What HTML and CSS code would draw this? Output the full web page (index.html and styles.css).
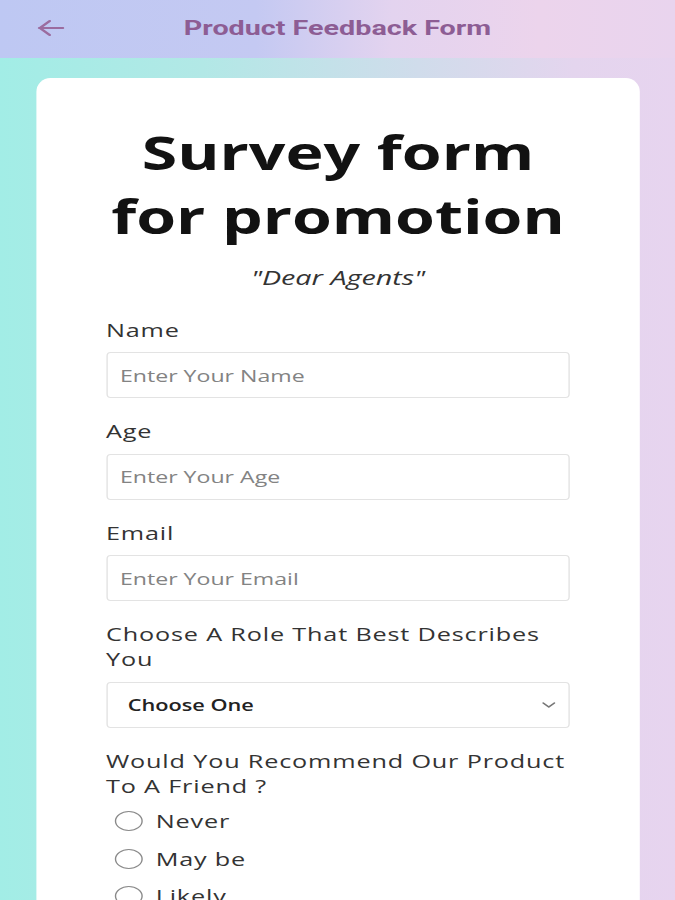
FILE: index.html
```html
<!DOCTYPE html>
<html lang="en">
<head>
<meta charset="utf-8">
<title>Product Feedback Form</title>
<link rel="stylesheet" href="styles.css">
</head>
<body>
<div class="page">
  <header class="topbar">
    <svg class="back" width="20" height="18" viewBox="0 0 20 18" aria-hidden="true">
      <path d="M19 9H2M9.5 2L2.5 9L9.5 16" fill="none" stroke="#9b6c9f" stroke-width="2" stroke-linecap="round" stroke-linejoin="round"/>
    </svg>
    <h1 class="topbar-title">Product Feedback Form</h1>
    <span></span>
  </header>
  <main class="bg">
    <form class="card">
      <h2 class="title">Survey form<br>for promotion</h2>
      <p class="subtitle">"Dear Agents"</p>

      <div class="field">
        <label class="label" for="name">Name</label>
        <input class="input" id="name" type="text" placeholder="Enter Your Name">
      </div>
      <div class="field">
        <label class="label" for="age">Age</label>
        <input class="input" id="age" type="text" placeholder="Enter Your Age">
      </div>
      <div class="field">
        <label class="label" for="email">Email</label>
        <input class="input" id="email" type="text" placeholder="Enter Your Email">
      </div>
      <div class="field">
        <label class="label">Choose A Role That Best Describes You</label>
        <div class="select">
          <span>Choose One</span>
          <svg class="chev" width="10" height="6" viewBox="0 0 10 6" aria-hidden="true">
            <path d="M1 1L5 5L9 1" fill="none" stroke="#777" stroke-width="1.3" stroke-linecap="round" stroke-linejoin="round"/>
          </svg>
        </div>
      </div>
      <div class="field">
        <span class="label label-q">Would You Recommend Our Product To A Friend ?</span>
        <div class="radios">
          <label class="radio"><span class="dot"></span>Never</label>
          <label class="radio"><span class="dot"></span>May be</label>
          <label class="radio"><span class="dot"></span>Likely</label>
        </div>
      </div>
    </form>
  </main>
</div>
</body>
</html>
```

FILE: styles.css
```css
* {
  box-sizing: border-box;
}

html, body {
  margin: 0;
  padding: 0;
}

body {
  background: #e6d5ee;
  overflow: hidden;
  font-family: "Open Sans", "Noto Sans", sans-serif;
  color: #333;
}

.page {
  width: 482.15px;
  transform: scaleX(1.4);
  transform-origin: 0 0;
}

.topbar {
  height: 58px;
  background: linear-gradient(90deg, #bec8f3 0%, #c4c9f2 38%, #e3d3ef 58%, #ecd4ec 80%, #e9d4ee 100%);
  display: grid;
  grid-template-columns: 1fr auto 1fr;
  align-items: center;
  padding: 0 25.7px 2px;
}

.back {
  display: block;
}

.topbar-title {
  margin: 0;
  font-family: Roboto, "Liberation Sans", sans-serif;
  font-weight: 700;
  font-size: 20.5px;
  color: #8d5d94;
}

.bg {
  background: linear-gradient(90deg, #a2ede6 0%, #b2e8e6 30%, #d0dceb 62%, #e4d5ee 85%, #e7d4ef 100%);
  padding: 20px 25px 40px 25.7px;
}

.card {
  background: #fff;
  border-radius: 10px / 14px;
  padding: 42px 50px 60px;
}

.title {
  margin: 0;
  text-align: center;
  font-size: 46px;
  line-height: 64px;
  font-weight: 700;
  color: #121212;
}

.subtitle {
  margin: 16.5px 0 28px;
  text-align: center;
  font-style: italic;
  font-size: 20.5px;
  line-height: 25px;
  color: #333;
}

.field {
  margin-bottom: 21px;
}

.label {
  display: block;
  font-size: 18px;
  line-height: 25px;
  letter-spacing: 0.6px;
  color: #333;
  margin-bottom: 9.5px;
}

.label-q {
  margin-bottom: 4px;
}

.input {
  display: block;
  width: 100%;
  height: 46px;
  border: 1px solid #e3e3e3;
  border-radius: 3px / 4px;
  padding: 0 9px;
  font-family: inherit;
  font-size: 16.5px;
  color: #333;
  background: #fff;
  outline: none;
}

.input::placeholder {
  color: #838383;
}

.select {
  height: 46px;
  border: 1px solid #e3e3e3;
  border-radius: 3px / 4px;
  padding: 0 9px 0 14.5px;
  display: flex;
  align-items: center;
  justify-content: space-between;
  font-size: 15.5px;
  font-weight: 600;
  color: #222;
}

.chev {
  display: block;
}

.radio {
  display: flex;
  align-items: center;
  height: 37.5px;
  font-size: 18px;
  letter-spacing: 0.6px;
  color: #333;
}

.dot {
  width: 20px;
  height: 20px;
  border: 1.3px solid #8a8a8a;
  border-radius: 50%;
  margin-left: 6px;
  margin-right: 9.5px;
  flex: none;
}
```
